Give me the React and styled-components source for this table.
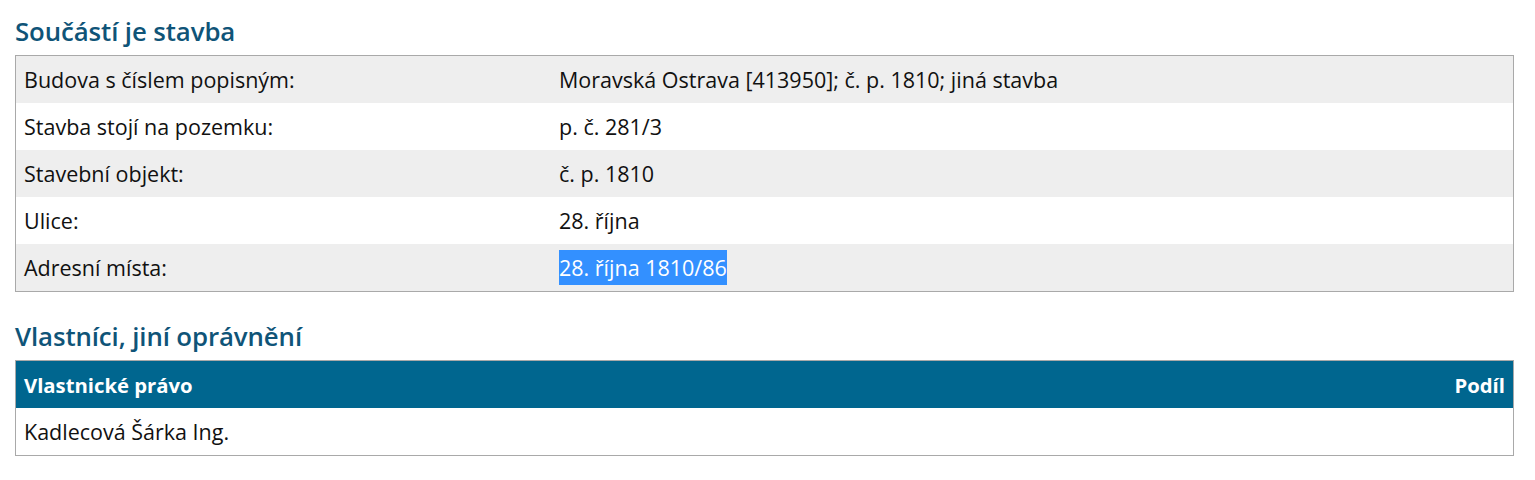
import React from "react";
import styled, { createGlobalStyle } from "styled-components";

const GlobalStyle = createGlobalStyle`
  body {
    margin: 0;
    background: #fff;
    font-family: "Open Sans", "Noto Sans", sans-serif;
    color: #111;
  }
`;

const Page = styled.div`
  padding: 14px 21px 0 15px;
`;

const Heading = styled.h2`
  margin: 0 0 7px;
  font-size: 25.8px;
  font-weight: 600;
  color: #0f5478;
  line-height: 34px;
  letter-spacing: -0.1px;
`;

const Section = styled.section`
  margin-bottom: 27px;
`;

const Table = styled.table`
  width: 100%;
  border-collapse: collapse;
  border: 1px solid #a9a9a9;
  font-size: 21.5px;
`;

const Row = styled.tr`
  background: ${({ $shaded }) => ($shaded ? "#eeeeee" : "#ffffff")};
`;

const Cell = styled.td`
  height: 47px;
  padding: 0 8px;
  vertical-align: middle;
  width: ${({ $w }) => $w || "auto"};
`;

const HeadRow = styled.tr`
  background: #00668f;
  color: #fff;
`;

const HeadCell = styled.th`
  height: 47px;
  padding: 0 8px;
  font-size: 20.3px;
  font-weight: 700;
  text-align: ${({ $align }) => $align || "left"};
`;

const Selected = styled.span`
  background: #3390ff;
  color: #fff;
  padding: 3px 0;
`;

const rows = [
  ["Budova s číslem popisným:", "Moravská Ostrava [413950]; č. p. 1810; jiná stavba"],
  ["Stavba stojí na pozemku:", "p. č. 281/3"],
  ["Stavební objekt:", "č. p. 1810"],
  ["Ulice:", "28. října"],
  ["Adresní místa:", <Selected>28. října 1810/86</Selected>],
];

export default function App() {
  return (
    <>
      <GlobalStyle />
      <Page>
        <Section>
          <Heading>Součástí je stavba</Heading>
          <Table>
            <tbody>
              {rows.map(([label, value], i) => (
                <Row key={label} $shaded={i % 2 === 0}>
                  <Cell $w="519px">{label}</Cell>
                  <Cell>{value}</Cell>
                </Row>
              ))}
            </tbody>
          </Table>
        </Section>
        <Section>
          <Heading>Vlastníci, jiní oprávnění</Heading>
          <Table>
            <thead>
              <HeadRow>
                <HeadCell>Vlastnické právo</HeadCell>
                <HeadCell $align="right">Podíl</HeadCell>
              </HeadRow>
            </thead>
            <tbody>
              <Row>
                <Cell>Kadlecová Šárka Ing.</Cell>
                <Cell />
              </Row>
            </tbody>
          </Table>
        </Section>
      </Page>
    </>
  );
}
